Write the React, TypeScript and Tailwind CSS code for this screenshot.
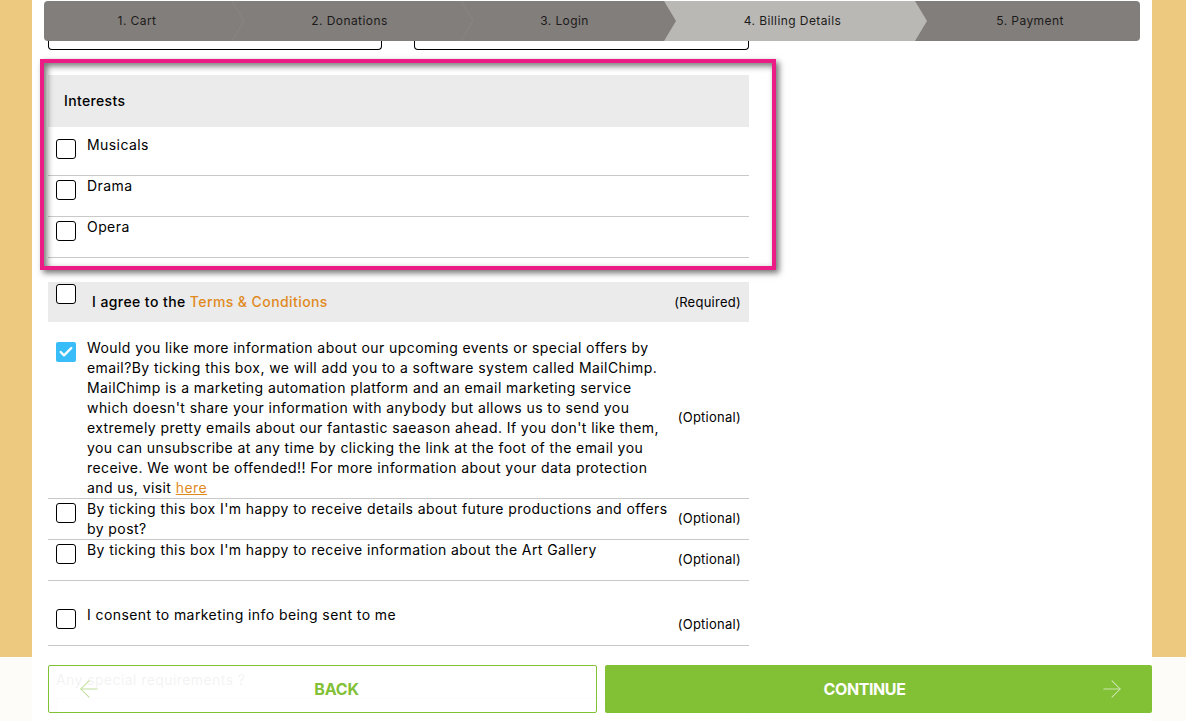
import { ArrowLeft, ArrowRight, Check } from 'lucide-react';

const steps = [
  { label: '1. Cart', w: 'w-[188px]', nudge: 'pr-[2px]' },
  { label: '2. Donations', w: 'w-[229px]', nudge: 'pl-[6px]' },
  { label: '3. Login', w: 'w-[203px]', nudge: 'pl-1' },
  { label: '4. Billing Details', w: 'w-[251px]', nudge: 'pl-[6px]', active: true },
  { label: '5. Payment', w: 'flex-1', nudge: 'pl-[5px]' },
];

function StepBar() {
  return (
    <div className="absolute left-[44px] top-px z-20 flex h-10 w-[1096px] overflow-hidden rounded bg-[#827e7b] text-[12px] tracking-[0.035em] text-[#1d1b1a]">
      {steps.map((step, i) => (
        <div
          key={step.label}
          className={`relative flex items-center justify-center ${step.w} ${step.nudge} ${step.active ? 'bg-[#b9b8b5]' : ''}`}
        >
          <span className="relative z-10">{step.label}</span>
          {i < 4 && (
            <svg className="absolute left-full top-0 z-10" width="12" height="40" viewBox="0 0 12 40">
              {(step.active || i === 2) && (
                <path d="M0 0L12 20L0 40Z" fill={step.active ? '#b9b8b5' : '#827e7b'} />
              )}
              {!step.active && i !== 2 && <path d="M0 0L12 20L0 40" fill="none" stroke="#8a8683" />}
            </svg>
          )}
        </div>
      ))}
    </div>
  );
}

function Box({ checked, className = '' }: { checked?: boolean; className?: string }) {
  if (checked) {
    return (
      <span className={`flex h-5 w-5 shrink-0 items-center justify-center rounded-[2px] bg-[#38bdf8] ${className}`}>
        <Check size={16} strokeWidth={3.5} color="#fff" />
      </span>
    );
  }
  return <span className={`block h-5 w-5 shrink-0 rounded-[3px] border border-black bg-white ${className}`} />;
}

function Optional({ label = '(Optional)' }: { label?: string }) {
  return <span className="shrink-0 text-[13px] tracking-[0.02em]">{label}</span>;
}

function InterestRow({ label, h }: { label: string; h: string }) {
  return (
    <div className={`flex gap-[11px] border-b border-[#c9c9c9] pl-2 ${h}`}>
      <Box className="mt-1" />
      <span>{label}</span>
    </div>
  );
}

export default function App() {
  return (
    <div className="relative h-[721px] overflow-hidden bg-[#edc97f] pl-8 pr-[34px] font-['Inter',sans-serif] text-[14px] leading-5 tracking-[0.03em] text-black">
      <StepBar />

      <main className="h-full bg-white px-4">
        <div className="flex w-[701px] justify-between pt-[41px]">
          <div className="h-[9px] w-[334px] rounded-b-sm border-x border-b border-black" />
          <div className="h-[9px] w-[335px] rounded-b-sm border-x border-b border-black" />
        </div>

        <div className="w-[701px]">
          <div className="mt-[25px] flex h-[52px] items-center bg-[#ebebeb] pl-4 font-medium tracking-[0.025em]">Interests</div>
          <div className="pt-2">
            <InterestRow label="Musicals" h="h-[41px]" />
          </div>
          <InterestRow label="Drama" h="h-[41px]" />
          <InterestRow label="Opera" h="h-[41px]" />

          <div className="mt-6 flex h-10 items-center justify-between bg-[#ebebeb] pl-2 pr-2">
            <div className="flex">
              <Box className="-mt-2" />
              <span className="ml-4 font-medium">
                I agree to the <span className="text-[#e08a1e]">Terms &amp; Conditions</span>
              </span>
            </div>
            <Optional label="(Required)" />
          </div>

          <div className="mt-4 flex h-[161px] items-center justify-between border-b border-[#c9c9c9] pl-2 pr-2">
            <div className="flex gap-[11px] self-start">
              <Box checked className="mt-1" />
              <p>
                Would you like more information about our upcoming events or special offers by
                <br />
                email?By ticking this box, we will add you to a software system called MailChimp.
                <br />
                MailChimp is a marketing automation platform and an email marketing service
                <br />
                which doesn't share your information with anybody but allows us to send you
                <br />
                extremely pretty emails about our fantastic saeason ahead. If you don't like them,
                <br />
                you can unsubscribe at any time by clicking the link at the foot of the email you
                <br />
                receive. We wont be offended!! For more information about your data protection
                <br />
                and us, visit <span className="text-[#e08a1e] underline">here</span>
              </p>
            </div>
            <span className="-mt-0.5"><Optional /></span>
          </div>

          <div className="flex h-[41px] justify-between border-b border-[#c9c9c9] pl-2 pr-2">
            <div className="flex gap-[11px]">
              <Box className="mt-1" />
              <p className="whitespace-nowrap">
                By ticking this box I'm happy to receive details about future productions and offers
                <br />
                by post?
              </p>
            </div>
            <span className="mt-[9px]"><Optional /></span>
          </div>

          <div className="flex h-[41px] justify-between border-b border-[#c9c9c9] pl-2 pr-2">
            <div className="flex gap-[11px]">
              <Box className="mt-1" />
              <p>By ticking this box I'm happy to receive information about the Art Gallery</p>
            </div>
            <span className="mt-[9px]"><Optional /></span>
          </div>

          <div className="flex h-[65px] justify-between border-b border-[#c9c9c9] pl-2 pr-2">
            <div className="flex gap-[11px]">
              <Box className="mt-7" />
              <p className="mt-6">I consent to marketing info being sent to me</p>
            </div>
            <span className="mt-[33px]"><Optional /></span>
          </div>

          <div className="mt-6 pl-2">Any special requirements ?</div>
          <div className="mt-2 ml-2 h-24 border border-[#c9c9c9]" />
        </div>
      </main>

      {/* annotation frame */}
      <div className="pointer-events-none absolute left-10 top-[59px] z-10 h-[211px] w-[736px] border-4 border-[#ec1c86] shadow-[3px_3px_6px_rgba(0,0,0,0.55),inset_3px_3px_6px_rgba(0,0,0,0.55)]" />

      <div className="absolute inset-x-0 bottom-0 z-20 flex h-16 gap-2 bg-white/95 pl-12 pr-[34px] pt-2">
        <button className="relative h-12 w-[549px] rounded-[2px] border border-[#82c036] pl-7 text-[16px] font-bold tracking-[-0.01em] text-[#82c036]">
          <ArrowLeft size={28} strokeWidth={0.9} className="absolute left-[26px] top-[9px] text-[#82c036] opacity-50" />
          BACK
        </button>
        <button className="relative h-12 flex-1 rounded-[2px] bg-[#82c036] pr-7 text-[16px] font-bold tracking-[-0.025em] text-white">
          <ArrowRight size={28} strokeWidth={0.9} className="absolute right-[26px] top-[10px] text-white opacity-60" />
          CONTINUE
        </button>
      </div>
    </div>
  );
}
